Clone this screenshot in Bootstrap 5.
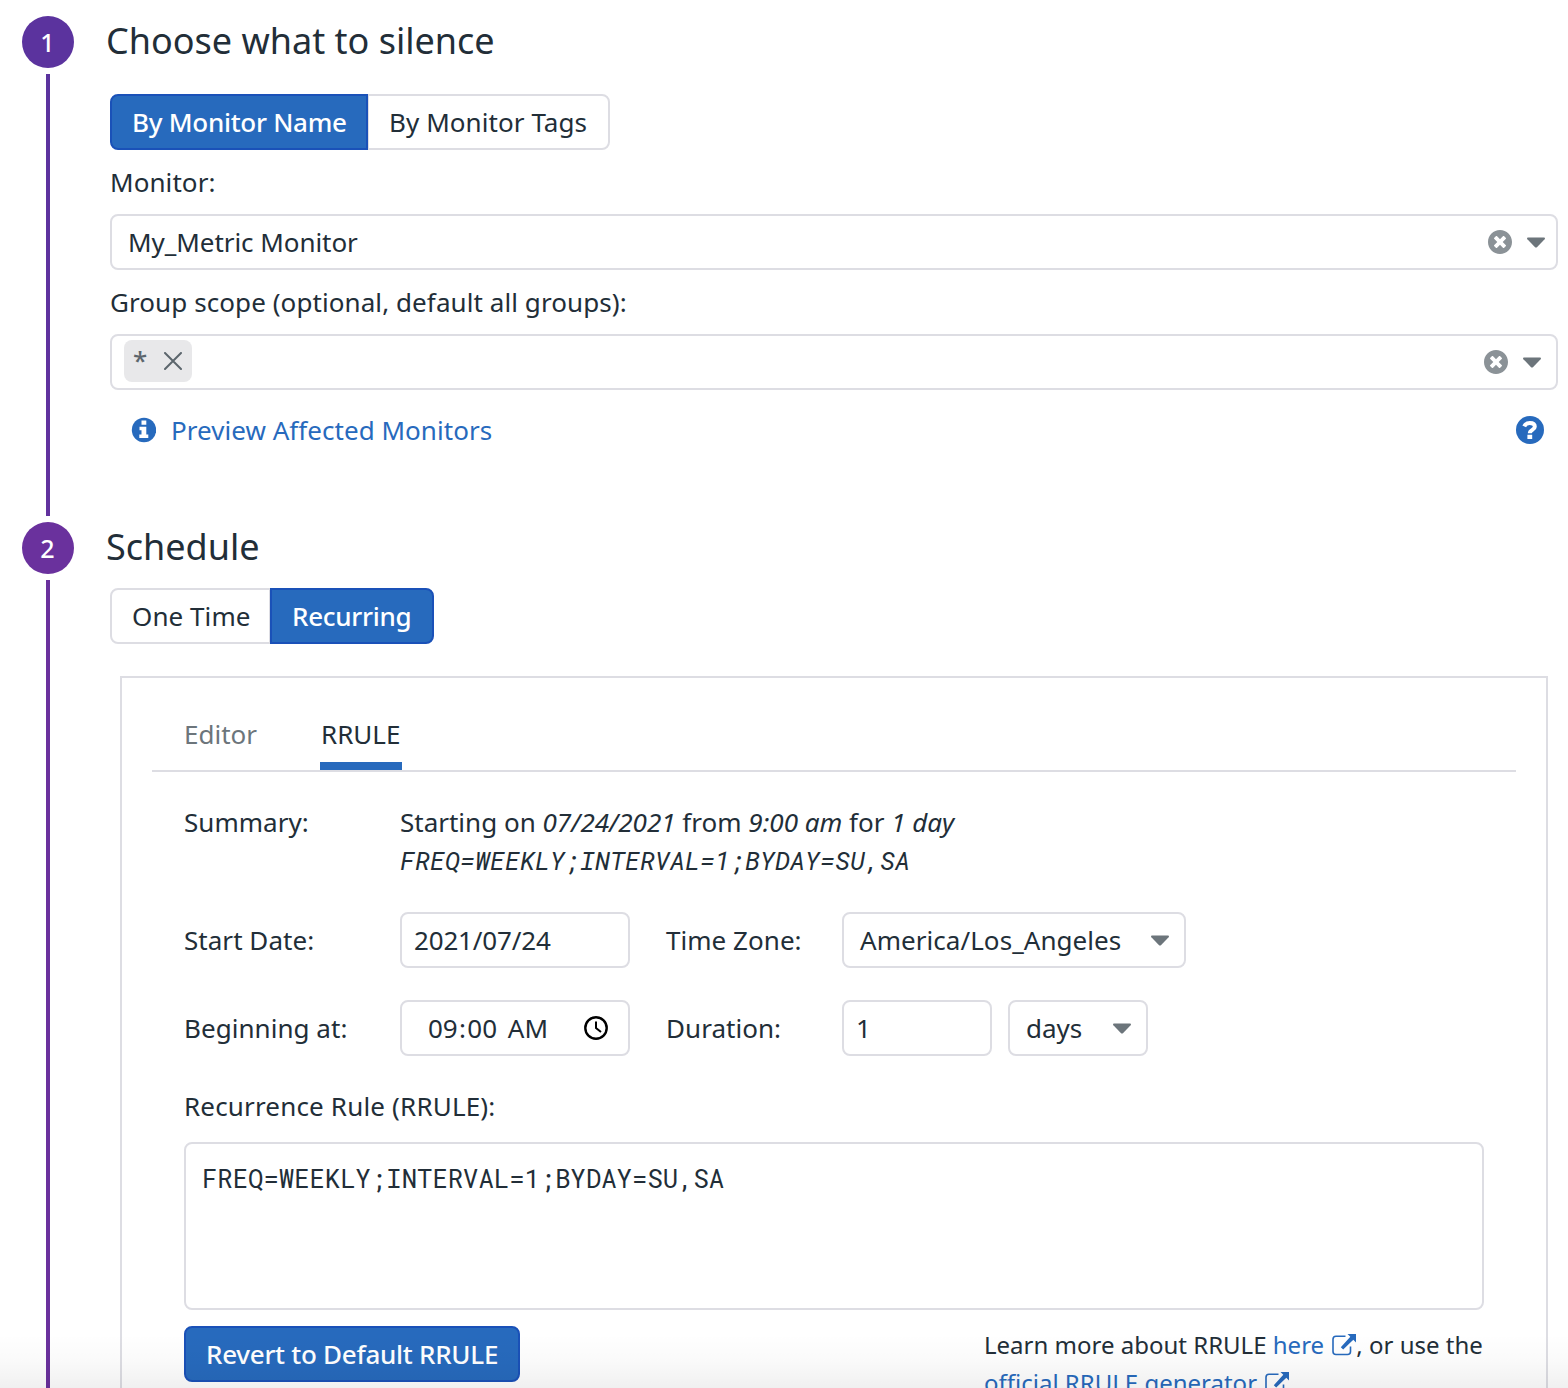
<!DOCTYPE html>
<html lang="en">
<head>
<meta charset="utf-8">
<title>Schedule downtime</title>
<meta name="viewport" content="width=device-width, initial-scale=1">
<link href="https://cdn.jsdelivr.net/npm/bootstrap@5.3.0/dist/css/bootstrap.min.css" rel="stylesheet">
<style>
  :root { --ink:#222e38; --line:#dddde3; --blue:#276abd; --blue-edge:#1a51b8; --muted:#6c757b; }
  html, body { height:1388px; overflow:hidden; }
  body { font-family:"Noto Sans", sans-serif; font-size:26px; line-height:38px; color:var(--ink); background:#fff; }
  svg { display:block; flex:none; }
  .step { padding-left:22px; }
  .step-one { margin-top:16px; height:506px; --tone:#5b339e; }
  .step-two { height:866px; --tone:#6a319d; }
  .rail { width:52px; flex:none; }
  .dot { width:52px; height:52px; border-radius:50%; background:var(--tone); color:#fff; font-weight:500; font-size:25px; margin-bottom:6px; padding-right:1px; flex:none; }
  .thread { width:4px; background:var(--tone); margin-bottom:6px; }
  .step-one .thread { background:linear-gradient(#5b339e,#62329e); }
  .step-two .thread { margin-bottom:0; }
  .step-body { padding:0 10px 0 36px; min-width:0; }
  .step-title { font-size:36px; line-height:52px; font-weight:400; margin:-1px 0 0 -4px; color:var(--ink); }
  .step-one .step-title { margin-bottom:27px; }
  .step-two .step-title { margin-bottom:15px; }
  .toggle { width:max-content; }
  .toggle .btn, .btn-revert { font-size:26px; line-height:38px; height:56px; padding:7px 0 7px 20px; border:2px solid var(--line); color:var(--ink); border-radius:8px; white-space:nowrap; text-align:left; flex:none; letter-spacing:.07px; }
  .toggle .btn.active, .btn-revert { background:var(--blue); border-color:var(--blue-edge); color:#fff; font-weight:500; letter-spacing:-.27px; }
  .w-name { width:258px; }
  .w-tags { width:243px; }
  .w-once { width:161px; }
  .w-recur { width:164px; }
  .btn-revert { width:336px; }
  .field-label { height:64px; padding-top:13px; letter-spacing:.08px; }
  .box { height:56px; border:2px solid var(--line); border-radius:8px; background:#fff; display:flex; align-items:center; white-space:nowrap; }
  .caret { margin-top:1px; }
  .monitor-name { letter-spacing:-.05px; }
  .chip { height:42px; width:68px; border-radius:8px; background:#e8e8ea; color:#5c666d; padding:0 10px 0 9px; margin-top:-2px; }
  .chip span { margin-top:-2px; font-weight:500; }
  .chip svg { margin-top:-1px; }
  a { color:var(--blue); text-decoration:none; }
  .preview { letter-spacing:.04px; }
  .panel { margin:32px 0 0 10px; width:1428px; height:760px; border:2px solid var(--line); padding:0 30px; }
  .tabs { height:94px; border-bottom:2px solid var(--line); padding:37px 0 0 32px; gap:63px; }
  .tabs .tab { height:55px; color:var(--muted); }
  .tabs .tab.active { color:var(--ink); border-bottom:8px solid var(--blue); padding:0 1px; width:82px; }
  .form-area { padding:0 32px; }
  .lab { width:216px; flex:none; letter-spacing:.04px; }
  .lab2 { width:176px; margin-left:36px; flex:none; letter-spacing:.04px; }
  .date-text { letter-spacing:-.17px; }
  .zone-text { letter-spacing:.05px; }
  .clock-text { word-spacing:4px; }
  .clock-text i { font-style:normal; padding:0 1.300px; }
  .mono { font-family:"Roboto Mono","DejaVu Sans Mono",monospace; font-size:25.600px; }
  .summary { margin-top:31px; height:76px; }
  .summary .mono { letter-spacing:-.02px; }
  .rule-title { margin-top:31px; height:55px; letter-spacing:.17px; }
  .rule-box { height:168px; padding:15px 16px; align-items:flex-start; }
  .learn { width:500px; white-space:nowrap; font-size:24px; }
  .learn svg { display:inline-block; vertical-align:-1.500px; margin-left:2px; }
  .fade-end { position:absolute; left:0; right:0; top:1334px; height:54px; background:linear-gradient(rgba(0,0,0,0),rgba(0,0,0,.018) 50%,rgba(0,0,0,.06)); pointer-events:none; }
</style>
<script src="https://cdn.jsdelivr.net/npm/bootstrap@5.3.0/dist/js/bootstrap.bundle.min.js"></script>
</head>
<body>
<svg width="0" height="0" class="position-absolute" aria-hidden="true">
  <symbol id="clear" viewBox="8 8 496 496"><path fill="#8b9297" d="M256 8C119 8 8 119 8 256s111 248 248 248 248-111 248-248S393 8 256 8zm121.600 313.100c4.700 4.700 4.700 12.300 0 17L338 377.600c-4.700 4.700-12.300 4.700-17 0L256 312l-65.100 65.600c-4.700 4.700-12.300 4.700-17 0L134.400 338c-4.700-4.700-4.700-12.300 0-17l65.600-65-65.600-65.100c-4.700-4.700-4.700-12.300 0-17l39.600-39.600c4.700-4.700 12.300-4.700 17 0l65 65.700 65.100-65.600c4.700-4.700 12.300-4.700 17 0l39.600 39.600c4.700 4.700 4.700 12.300 0 17L312 256l65.600 65.100z"/></symbol>
  <symbol id="caret" viewBox="0 0 18 11"><path fill="#6c757b" d="M1 .500h16q1.600.4.600 1.700L10.200 9.900q-1.200 1.100-2.400 0L.4 2.200Q-.6.900 1 .500z"/></symbol>
  <symbol id="ext" viewBox="0 0 24 22"><path fill="none" stroke="#276abd" stroke-width="1.600" d="M13.500 2.300H4Q1 2.300 1 5.300v12.200q0 3 3 3h11.500q3 0 3-3V12.500"/><path fill="#276abd" d="M15.500 0H24v8.500l-2.700-2.700-10.100 9.800-2.400-2.400L18.300 2.800z"/></symbol>
</svg>

<section class="step step-one d-flex">
  <div class="rail d-flex flex-column align-items-center">
    <div class="dot d-flex align-items-center justify-content-center">1</div>
    <div class="thread flex-grow-1"></div>
  </div>
  <div class="step-body flex-grow-1">
    <h2 class="step-title">Choose what to silence</h2>
    <div class="btn-group toggle d-flex">
      <button class="btn active w-name">By Monitor Name</button>
      <button class="btn w-tags">By Monitor Tags</button>
    </div>
    <div class="field-label">Monitor:</div>
    <div class="box justify-content-between ps-3" style="padding-right:11px">
      <span class="monitor-name">My_Metric Monitor</span>
      <span class="d-flex align-items-center" style="gap:15px"><svg width="24" height="24"><use href="#clear"/></svg><svg class="caret" width="18" height="11"><use href="#caret"/></svg></span>
    </div>
    <div class="field-label">Group scope (optional, default all groups):</div>
    <div class="box justify-content-between" style="padding:0 15px 0 12px">
      <span class="chip d-flex align-items-center justify-content-between"><span>*</span><svg width="18" height="18" viewBox="0 0 18 18" stroke="#5c666d" stroke-width="2" stroke-linecap="round"><path d="M1 1l16 16M17 1L1 17"/></svg></span>
      <span class="d-flex align-items-center" style="gap:15px"><svg width="24" height="24"><use href="#clear"/></svg><svg class="caret" width="18" height="11"><use href="#caret"/></svg></span>
    </div>
    <div class="d-flex align-items-center justify-content-between" style="padding:21px 14px 0 21px">
      <a href="#" class="preview d-flex align-items-center" style="gap:15px">
        <svg width="25" height="26" viewBox="0 0 25 26"><circle cx="13" cy="13" r="12.200" fill="#276abd"/><path fill="#fff" d="M10.500 3.500h4.800v4.300h-4.800zM8.500 9.800h6.800v7.700h2V21h-9v-3.500h2.200v-4.200h-2z"/></svg>
        <span>Preview Affected Monitors</span>
      </a>
      <svg width="28" height="28" viewBox="0 0 28 28"><circle cx="14" cy="14" r="14" fill="#276abd"/><path fill="none" stroke="#fff" stroke-width="4" d="M8.200 10.400C9.400 7.800 11.300 7 13.800 7c3.200 0 5 1.500 5 3.700 0 3.300-5 3-5 6.500"/><path fill="#fff" d="M11.400 18.700h4.800V23h-4.800z"/></svg>
    </div>
  </div>
</section>

<section class="step step-two d-flex">
  <div class="rail d-flex flex-column align-items-center">
    <div class="dot d-flex align-items-center justify-content-center">2</div>
    <div class="thread flex-grow-1"></div>
  </div>
  <div class="step-body flex-grow-1">
    <h2 class="step-title">Schedule</h2>
    <div class="btn-group toggle d-flex">
      <button class="btn w-once">One Time</button>
      <button class="btn active w-recur">Recurring</button>
    </div>
    <div class="panel">
      <div class="tabs d-flex">
        <div class="tab">Editor</div>
        <div class="tab active">RRULE</div>
      </div>
      <div class="form-area">
        <div class="summary d-flex">
          <div class="lab">Summary:</div>
          <div>
            <div>Starting on <em>07/24/2021</em> from <em>9:00 am</em> for <em>1 day</em></div>
            <div><em class="mono">FREQ=WEEKLY;INTERVAL=1;BYDAY=SU,SA</em></div>
          </div>
        </div>
        <div class="d-flex align-items-center" style="margin-top:33px">
          <div class="lab">Start Date:</div>
          <div class="box date-text" style="width:230px;padding-left:12px">2021/07/24</div>
          <div class="lab2">Time Zone:</div>
          <div class="box justify-content-between ps-3" style="width:344px;padding-right:15px"><span class="zone-text">America/Los_Angeles</span><svg class="caret" width="18" height="11"><use href="#caret"/></svg></div>
        </div>
        <div class="d-flex align-items-center" style="margin-top:32px">
          <div class="lab">Beginning at:</div>
          <div class="box justify-content-between" style="width:230px;padding:0 20px 0 26px"><span class="clock-text">09<i>:</i>00 AM</span>
            <svg width="24" height="24" viewBox="0 0 24 24" fill="none" stroke="#000"><circle cx="12" cy="12" r="10.700" stroke-width="2.400"/><path stroke-width="2" d="M12 5.500V12l5 4"/></svg></div>
          <div class="lab2">Duration:</div>
          <div class="box" style="width:150px;padding-left:12px">1</div>
          <div class="box justify-content-between ms-3 ps-3" style="width:140px;padding-right:15px"><span>days</span><svg class="caret" width="18" height="11"><use href="#caret"/></svg></div>
        </div>
        <div class="rule-title">Recurrence Rule (RRULE):</div>
        <div class="box rule-box mono">FREQ=WEEKLY;INTERVAL=1;BYDAY=SU,SA</div>
        <div class="d-flex justify-content-between" style="margin-top:16px">
          <button class="btn btn-revert">Revert to Default RRULE</button>
          <div class="learn">Learn more about RRULE <a href="#">here <svg width="24" height="22"><use href="#ext"/></svg></a>, or use the<br><a href="#">official RRULE generator <svg width="24" height="22"><use href="#ext"/></svg></a></div>
        </div>
      </div>
    </div>
  </div>
</section>
<div class="fade-end"></div>
</body>
</html>
